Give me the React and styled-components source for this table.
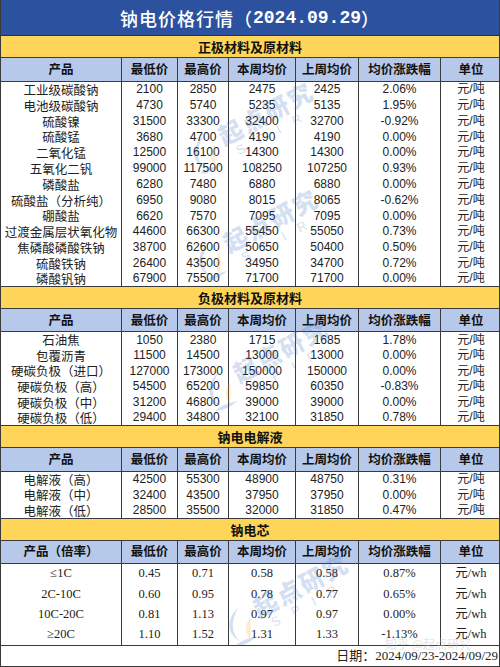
import React from "react";
import styled, { createGlobalStyle } from "styled-components";

const GlobalStyle = createGlobalStyle`
  html, body {
    margin: 0;
    padding: 0;
    background: #ffffff;
  }
  body {
    font-family: "Liberation Sans", "Noto Sans CJK SC", sans-serif;
  }
`;

const COLS = "121px 56px 51px 67px 63px 82px 60px";

const Sheet = styled.div`
  position: relative;
  width: 500px;
  height: 667px;
  box-sizing: border-box;
  border-left: 1px solid #3a3a3a;
  border-right: 1px solid #3a3a3a;
  overflow: hidden;
  display: flex;
  flex-direction: column;
`;

const Title = styled.div`
  height: 36px;
  flex: none;
  background: #2c529f;
  border-bottom: 1px solid #1d2f5a;
  box-sizing: border-box;
  display: flex;
  align-items: center;
  justify-content: center;
  color: #ffffff;
  font-family: "Noto Sans CJK SC", sans-serif;
  font-size: 18px;
  font-weight: 500;
  line-height: 1;
  letter-spacing: 1px;
`;

const TitleNum = styled.span`
  font-family: "Liberation Mono", monospace;
  font-weight: 700;
  font-size: 18px;
  letter-spacing: 0;
`;

const Band = styled.div`
  height: ${({ h }) => h}px;
  flex: none;
  background: #fed558;
  border-bottom: 1px solid #3a3a3a;
  box-sizing: border-box;
  display: flex;
  align-items: center;
  justify-content: center;
  font-family: "Noto Sans CJK SC", sans-serif;
  font-weight: 700;
  font-size: 13px;
  line-height: 1;
  color: #111;
`;

const HeadRow = styled.div`
  height: ${({ h }) => h}px;
  flex: none;
  display: grid;
  grid-template-columns: ${COLS};
  background: #b7c9ea;
  border-bottom: 1px solid #3a3a3a;
  box-sizing: border-box;
`;

const HeadCell = styled.div`
  display: flex;
  align-items: center;
  justify-content: center;
  border-right: ${({ last }) => (last ? "none" : "1px solid #3a3a3a")};
  font-family: "Noto Sans CJK SC", sans-serif;
  font-weight: 700;
  font-size: 12.5px;
  line-height: 1;
  color: #111;
  white-space: nowrap;
`;

const Row = styled.div`
  height: ${({ h }) => h}px;
  flex: none;
  display: grid;
  grid-template-columns: ${COLS};
  background: #ffffff;
  border-bottom: ${({ edge }) => (edge ? "1px solid #3a3a3a" : "none")};
  box-sizing: border-box;
`;

const Cell = styled.div`
  display: flex;
  align-items: center;
  justify-content: center;
  border-right: ${({ last }) => (last ? "none" : "1px solid #3a3a3a")};
  font-family: ${({ serif }) =>
    serif
      ? `"Liberation Serif", "Noto Sans CJK SC", serif`
      : `"Liberation Sans", "Noto Sans CJK SC", sans-serif`};
  font-size: ${({ serif }) => (serif ? "12.5px" : "12px")};
  line-height: 1.1;
  color: #222;
  white-space: nowrap;
`;

const Name = styled.span`
  font-family: "Noto Sans CJK SC", sans-serif;
  font-size: 12.5px;
  line-height: 1.1;
  color: #222;
`;

const Footer = styled.div`
  flex: 1;
  display: flex;
  align-items: center;
  justify-content: flex-end;
  padding-right: 1px;
  border-bottom: 1px solid #3a3a3a;
  font-family: "Liberation Serif", "Noto Sans CJK SC", serif;
  font-size: 13px;
  line-height: 1;
  color: #222;
`;

const Mark = styled.div`
  position: absolute;
  left: ${({ x }) => x}px;
  top: ${({ y }) => y}px;
  transform: rotate(-28deg);
  display: flex;
  align-items: center;
  gap: 4px;
  opacity: 0.22;
  pointer-events: none;
`;

const MarkText = styled.div`
  display: flex;
  flex-direction: column;
  align-items: center;
  color: #3f76c6;
  font-family: "Noto Sans CJK SC", sans-serif;
  font-weight: 900;
  font-size: 24px;
  line-height: 1;
  letter-spacing: 2px;
`;

const MarkSub = styled.span`
  font-family: "Liberation Sans", sans-serif;
  font-weight: 400;
  font-size: 13px;
  letter-spacing: 14px;
  margin-top: 2px;
`;

const ZhihuMark = styled.div`
  position: absolute;
  left: 384px;
  top: 638px;
  color: #c4c4c4;
  opacity: 0.45;
  font-family: "Noto Sans CJK SC", sans-serif;
  font-size: 12px;
  line-height: 1;
  pointer-events: none;
`;

const HEAD = ["产品", "最低价", "最高价", "本周均价", "上周均价", "均价涨跌幅", "单位"];

const sections = [
  {
    title: "正极材料及原材料",
    band: 22,
    head: 24,
    row: 15.8,
    rows: [
      ["工业级碳酸钠", "2100", "2850", "2475", "2425", "2.06%", "元/吨"],
      ["电池级碳酸钠", "4730", "5740", "5235", "5135", "1.95%", "元/吨"],
      ["硫酸镍", "31500", "33300", "32400", "32700", "-0.92%", "元/吨"],
      ["硫酸锰", "3680", "4700", "4190", "4190", "0.00%", "元/吨"],
      ["二氧化锰", "12500", "16100", "14300", "14300", "0.00%", "元/吨"],
      ["五氧化二钒", "99000", "117500", "108250", "107250", "0.93%", "元/吨"],
      ["磷酸盐", "6280", "7480", "6880", "6880", "0.00%", "元/吨"],
      ["硫酸盐（分析纯）", "6950", "9080", "8015", "8065", "-0.62%", "元/吨"],
      ["硼酸盐", "6620", "7570", "7095", "7095", "0.00%", "元/吨"],
      ["过渡金属层状氧化物", "44600", "66300", "55450", "55050", "0.73%", "元/吨"],
      ["焦磷酸磷酸铁钠", "38700", "62600", "50650", "50400", "0.50%", "元/吨"],
      ["硫酸铁钠", "26400", "43500", "34950", "34700", "0.72%", "元/吨"],
      ["磷酸钒钠", "67900", "75500", "71700", "71700", "0.00%", "元/吨"],
    ],
  },
  {
    title: "负极材料及原材料",
    band: 22,
    head: 23,
    row: 15.6,
    rows: [
      ["石油焦", "1050", "2380", "1715", "1685", "1.78%", "元/吨"],
      ["包覆沥青", "11500", "14500", "13000", "13000", "0.00%", "元/吨"],
      ["硬碳负极（进口）", "127000", "173000", "150000", "150000", "0.00%", "元/吨"],
      ["硬碳负极（高）", "54500", "65200", "59850", "60350", "-0.83%", "元/吨"],
      ["硬碳负极（中）", "31200", "46800", "39000", "39000", "0.00%", "元/吨"],
      ["硬碳负极（低）", "29400", "34800", "32100", "31850", "0.78%", "元/吨"],
    ],
  },
  {
    title: "钠电电解液",
    band: 22,
    head: 24,
    row: 15.6,
    rows: [
      ["电解液（高）", "42500", "55300", "48900", "48750", "0.31%", "元/吨"],
      ["电解液（中）", "32400", "43500", "37950", "37950", "0.00%", "元/吨"],
      ["电解液（低）", "28500", "35500", "32000", "31850", "0.47%", "元/吨"],
    ],
  },
  {
    title: "钠电芯",
    band: 22,
    head: 23,
    row: 20.5,
    serif: true,
    first: "产品（倍率）",
    rows: [
      ["≤1C", "0.45", "0.71", "0.58", "0.58", "0.87%", "元/wh"],
      ["2C-10C", "0.60", "0.95", "0.78", "0.77", "0.65%", "元/wh"],
      ["10C-20C", "0.81", "1.13", "0.97", "0.97", "0.00%", "元/wh"],
      ["≥20C", "1.10", "1.52", "1.31", "1.33", "-1.13%", "元/wh"],
    ],
  },
];

const Section = ({ s }) => (
  <>
    <Band h={s.band}>{s.title}</Band>
    <HeadRow h={s.head}>
      {HEAD.map((t, i) => (
        <HeadCell key={t} last={i === HEAD.length - 1}>
          {i === 0 && s.first ? s.first : t}
        </HeadCell>
      ))}
    </HeadRow>
    {s.rows.map((r, ri) => (
      <Row key={r[0]} h={s.row} edge={ri === s.rows.length - 1}>
        {r.map((v, i) => (
          <Cell key={i} serif={s.serif} last={i === r.length - 1}>
            {i === 0 && !s.serif ? <Name>{v}</Name> : v}
          </Cell>
        ))}
      </Row>
    ))}
  </>
);

const Watermark = ({ x, y }) => (
  <Mark x={x} y={y}>
    <svg width="34" height="40" viewBox="0 0 34 40">
      <path d="M24 4 C8 8 2 22 10 34 C6 22 12 12 24 4 Z" fill="#3f76c6" />
      <path d="M30 18 C22 22 18 28 20 38 C24 30 28 26 30 18 Z" fill="#f2b233" />
      <path d="M4 36 C12 34 20 36 28 38 C18 40 10 40 4 36 Z" fill="#3f76c6" />
    </svg>
    <MarkText>
      起点研究
      <MarkSub>SPIR</MarkSub>
    </MarkText>
  </Mark>
);

export default function App() {
  return (
    <>
      <GlobalStyle />
      <Sheet>
        <Title>
          钠电价格行情（<TitleNum>2024.09.29</TitleNum>）
        </Title>
        {sections.map((s) => (
          <Section key={s.title} s={s} />
        ))}
        <Footer>日期：2024/09/23-2024/09/29</Footer>
        <Watermark x={180} y={108} />
        <Watermark x={185} y={215} />
        <Watermark x={195} y={345} />
        <Watermark x={215} y={580} />
        <ZhihuMark>知乎 @起点研究</ZhihuMark>
      </Sheet>
    </>
  );
}
